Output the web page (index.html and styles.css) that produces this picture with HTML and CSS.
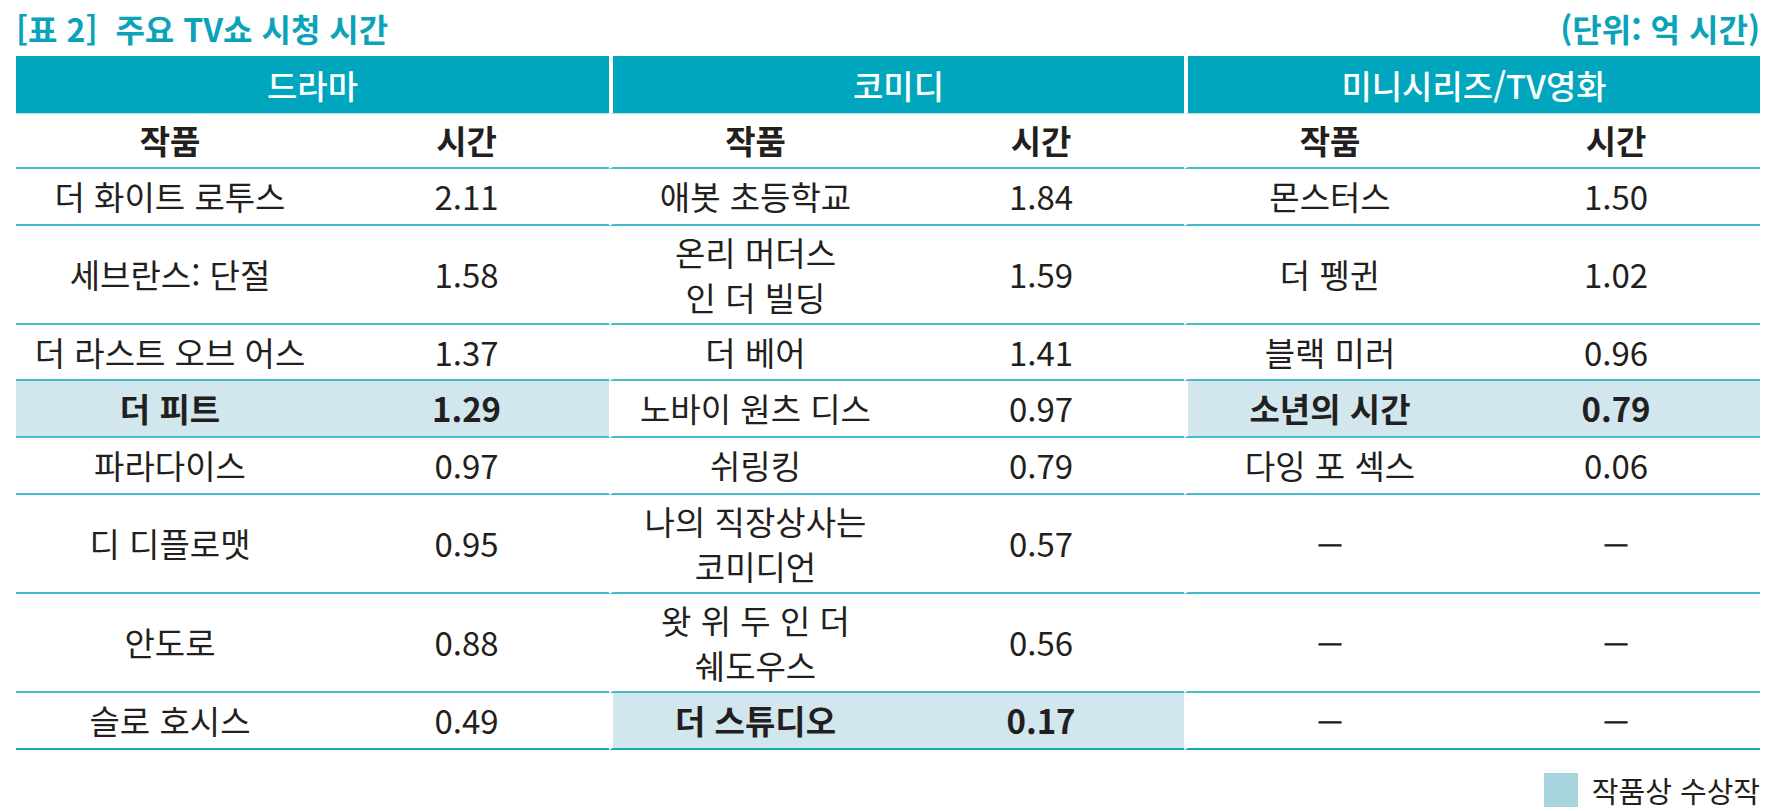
FILE: index.html
```html
<!DOCTYPE html>
<html lang="ko">
<head>
<meta charset="utf-8">
<title>주요 TV쇼 시청 시간</title>
<link rel="stylesheet" href="styles.css">
</head>
<body>
<div class="page">
  <div class="caption">
    <h1 class="title">[표 2]&nbsp; 주요 TV쇼 시청 시간</h1>
    <span class="unit">(단위: 억 시간)</span>
  </div>

  <div class="table">
    <div class="grp c-a">드라마</div>
    <div class="grp c-b gs">코미디</div>
    <div class="grp c-c gs">미니시리즈/TV영화</div>

    <div class="sub">작품</div><div class="sub">시간</div>
    <div class="sub gs">작품</div><div class="sub">시간</div>
    <div class="sub gs">작품</div><div class="sub">시간</div>

    <div class="cell">더 화이트 로투스</div><div class="cell">2.11</div>
    <div class="cell gs">애봇 초등학교</div><div class="cell">1.84</div>
    <div class="cell gs">몬스터스</div><div class="cell">1.50</div>

    <div class="cell">세브란스: 단절</div><div class="cell">1.58</div>
    <div class="cell gs">온리 머더스<br>인 더 빌딩</div><div class="cell">1.59</div>
    <div class="cell gs">더 펭귄</div><div class="cell">1.02</div>

    <div class="cell">더 라스트 오브 어스</div><div class="cell">1.37</div>
    <div class="cell gs">더 베어</div><div class="cell">1.41</div>
    <div class="cell gs">블랙 미러</div><div class="cell">0.96</div>

    <div class="cell hl b">더 피트</div><div class="cell hl b">1.29</div>
    <div class="cell gs">노바이 원츠 디스</div><div class="cell">0.97</div>
    <div class="cell gs hl b">소년의 시간</div><div class="cell hl b">0.79</div>

    <div class="cell">파라다이스</div><div class="cell">0.97</div>
    <div class="cell gs">쉬링킹</div><div class="cell">0.79</div>
    <div class="cell gs">다잉 포 섹스</div><div class="cell">0.06</div>

    <div class="cell">디 디플로맷</div><div class="cell">0.95</div>
    <div class="cell gs">나의 직장상사는<br>코미디언</div><div class="cell">0.57</div>
    <div class="cell gs dash">―</div><div class="cell dash">―</div>

    <div class="cell">안도로</div><div class="cell">0.88</div>
    <div class="cell gs">왓 위 두 인 더<br>쉐도우스</div><div class="cell">0.56</div>
    <div class="cell gs dash">―</div><div class="cell dash">―</div>

    <div class="cell last">슬로 호시스</div><div class="cell last">0.49</div>
    <div class="cell last gs hl b">더 스튜디오</div><div class="cell last hl b">0.17</div>
    <div class="cell last gs dash">―</div><div class="cell last dash">―</div>
  </div>

  <div class="legend">
    <span class="swatch"></span>
    <span class="legend-text">작품상 수상작</span>
  </div>
</div>
</body>
</html>
```

FILE: styles.css
```css
* { box-sizing: border-box; }

html, body {
  margin: 0;
  padding: 0;
  background: #ffffff;
}

body {
  font-family: "Noto Sans CJK KR", "Noto Sans", sans-serif;
  color: #231f20;
}

.page {
  width: 1771px;
  padding: 0 11px 0 16px;
}

.caption {
  height: 56px;
  display: flex;
  align-items: center;
  justify-content: space-between;
  color: #0aa3ba;
  font-weight: 700;
  font-size: 32px;
}

.title {
  margin: 0;
  font-size: 32px;
  font-weight: 700;
}

.unit {
  font-size: 32px;
}

.table {
  display: grid;
  grid-template-columns: 308px 285px 289px 286px 288px 288px;
  grid-template-rows: 57px 56px 57px 99px 56px 57px 57px 99px 99px 57px;
}

.grp {
  grid-column: span 2;
  background: #00a6bd;
  background-clip: padding-box;
  color: #ffffff;
  font-size: 33px;
  font-weight: 500;
  display: flex;
  align-items: center;
  justify-content: center;
}

.gs {
  border-left: 4px solid transparent;
  background-clip: padding-box;
}

.sub,
.cell {
  display: flex;
  align-items: center;
  justify-content: center;
  text-align: center;
  border-bottom: 2px solid #45bccd;
  font-size: 33px;
  line-height: 45px;
}

.sub {
  font-weight: 700;
  border-top: 1px solid #b2e0e8;
}

.hl {
  background-color: #d1e6ed;
}

.b {
  font-weight: 700;
}

.last {
  border-bottom: 2px solid #14a9bf;
}

.dash {
  font-size: 26px;
  font-weight: 700;
  color: #231f20;
  -webkit-text-stroke: 0.9px #231f20;
}

.legend {
  display: flex;
  justify-content: flex-end;
  align-items: center;
  gap: 14px;
  margin-top: 22px;
  height: 36px;
}

.swatch {
  width: 34px;
  height: 34px;
  background: #a8d4e0;
}

.legend-text {
  font-size: 29px;
  line-height: 34px;
}
```
